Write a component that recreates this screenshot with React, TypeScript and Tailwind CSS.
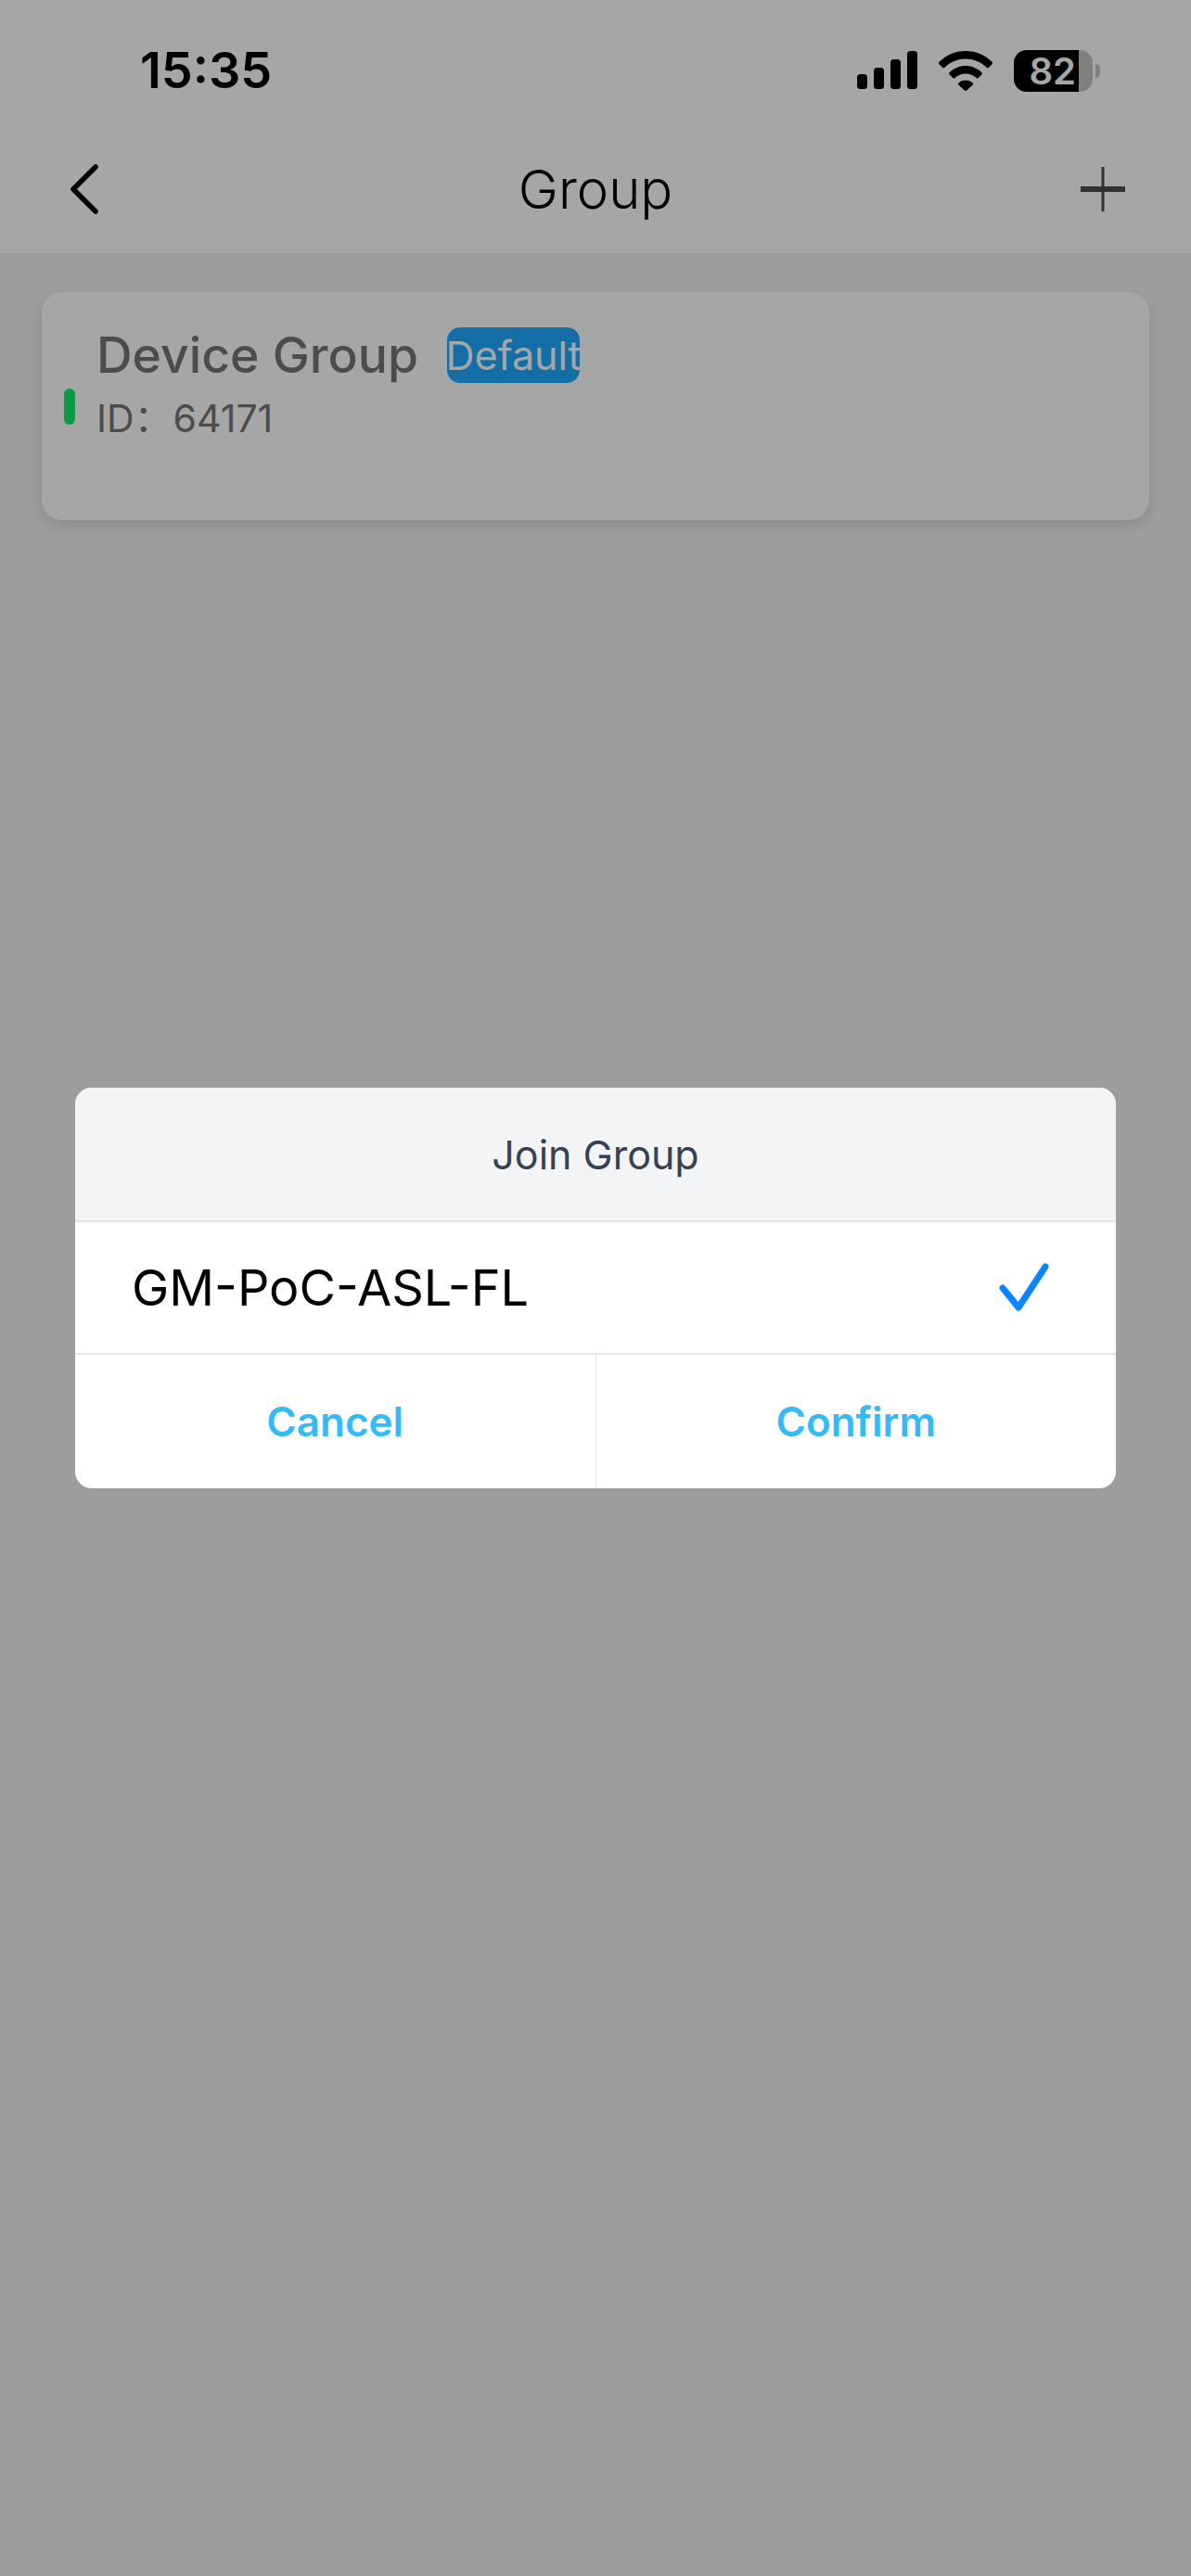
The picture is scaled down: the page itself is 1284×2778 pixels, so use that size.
const sans = "font-['Inter','Liberation_Sans',sans-serif]";

export default function App() {
  return (
    <div className={`relative flex h-[2778px] w-[1284px] flex-col overflow-hidden bg-[#f2f2f2] ${sans}`}>
      <header className="flex h-[273px] flex-col bg-white">
        <div className="flex h-[150px] items-center justify-between pl-[151px] pr-[98px] pt-[2px]">
          <span className="text-[54px] leading-none font-semibold text-black">15:35</span>
          <div className="flex items-center">
            <svg width="66" height="42" viewBox="0 0 66 42" fill="#000">
              <rect x="0" y="25" width="11" height="16" rx="3.5" />
              <rect x="18" y="18" width="11" height="23" rx="3.5" />
              <rect x="36" y="9" width="11" height="32" rx="3.5" />
              <rect x="54" y="0" width="11" height="41" rx="3.5" />
            </svg>
            <svg className="ml-[22px]" width="58" height="43" viewBox="0 0 58 43" fill="#000">
              <path d="M29 0C18 0 8 4.400 0.500 11.800c-.7.700-.7 1.700 0 2.400l3.500 3.600c.7.700 1.700.7 2.400 0C12.200 12 20.300 8.600 29 8.600s16.800 3.400 22.600 9.200c.7.700 1.700.7 2.400 0l3.500-3.600c.7-.7.700-1.700 0-2.400C50 4.400 40 0 29 0z" />
              <path d="M29 16c-6.700 0-12.800 2.700-17.300 7-.7.700-.7 1.700 0 2.400l3.500 3.500c.7.700 1.700.7 2.400 0 3-2.800 7-4.500 11.400-4.500s8.400 1.700 11.400 4.500c.7.700 1.700.7 2.400 0l3.500-3.500c.7-.7.700-1.700 0-2.400C41.800 18.700 35.700 16 29 16z" />
              <path d="M29 31.500c-3 0-5.700 1.100-7.700 3-.6.600-.6 1.500 0 2.100l6.500 5.900c.7.600 1.700.600 2.400 0l6.500-5.900c.6-.6.600-1.500 0-2.100-2-1.900-4.700-3-7.700-3z" />
            </svg>
            <div className="ml-[23px] flex h-[45px] w-[85px] rounded-[14px] bg-[#c5c5c5]">
              <div className="flex h-full w-[70px] items-center justify-end rounded-l-[14px] bg-black pr-[3px]">
                <span className="text-[40px] leading-[45px] font-semibold text-white">82</span>
              </div>
            </div>
            <div className="ml-[3px] h-[15px] w-[5px] rounded-r-full bg-[#c5c5c5]" />
          </div>
        </div>
        <div className="grid flex-1 grid-cols-3 items-center pb-[16px] pl-[75px] pr-[71px]">
          <svg className="justify-self-start" width="34" height="54" viewBox="0 0 34 54" fill="none" stroke="#000" strokeWidth="5.500" strokeLinecap="round" strokeLinejoin="round">
            <path d="M28 3 L4 27 L28 51" />
          </svg>
          <span className="justify-self-center pr-[4px] text-[58px] leading-none font-light text-black">Group</span>
          <svg className="justify-self-end" width="48" height="48" viewBox="0 0 48 48" fill="none" stroke="#4e4e4e" strokeLinecap="butt">
            <path d="M24 0V48" strokeWidth="3" />
            <path d="M0 24H48" strokeWidth="6" />
          </svg>
        </div>
      </header>

      <main className="px-[45px] pt-[42px]">
        <div className="relative flex h-[246px] items-start rounded-[22px] bg-white pl-[24px] pt-[38px] shadow-[0_6px_14px_rgba(0,0,0,0.12)]">
          <div className="mt-[66px] h-[39px] w-[12px] rounded-full bg-[#10ec6a]" />
          <div className="ml-[23px] flex flex-col">
            <div className="flex items-center">
              <span className="text-[53.5px] leading-[60px] font-medium text-[#767676]">Device Group</span>
              <span className="ml-[31px] flex h-[60px] w-[143px] items-center justify-center rounded-[14px] bg-[#1fa9ff] text-[43px] leading-none text-white">Default</span>
            </div>
            <span className="mt-[9px] text-[41px] leading-[52px] text-[#767676]">
              ID<span className="font-['Noto_Sans_CJK_SC',sans-serif]">：</span><span className="ml-[1px]">64171</span>
            </span>
          </div>
        </div>
      </main>

      <div className="absolute inset-0 flex items-start justify-center bg-black/35 pt-[1173px]">
        <div className="flex h-[432px] w-[1122px] flex-col overflow-hidden rounded-[18px] bg-white">
          <div className="flex h-[145px] items-center justify-center border-b-2 border-[#e5e5e5] bg-[#f3f4f6] pt-[2px] text-[43px] text-[#374151]">Join Group</div>
          <div className="flex h-[143px] items-center justify-between border-b-2 border-[#e5e5e5] pl-[61px] pr-[72px]">
            <span className="text-[54px] leading-none text-black">GM-PoC-ASL-FL</span>
            <svg width="54" height="54" viewBox="0 0 54 54" fill="none" stroke="#0a84ff" strokeWidth="7" strokeLinecap="round" strokeLinejoin="round">
              <path d="M4 27 L21 48 L50 4" />
            </svg>
          </div>
          <div className="flex flex-1">
            <button className="flex flex-1 items-center justify-center text-[44px] font-semibold text-[#33bbf5]">Cancel</button>
            <div className="w-px bg-[#e5e5e5]" />
            <button className="flex flex-1 items-center justify-center text-[44px] font-semibold text-[#33bbf5]">Confirm</button>
          </div>
        </div>
      </div>
    </div>
  );
}
